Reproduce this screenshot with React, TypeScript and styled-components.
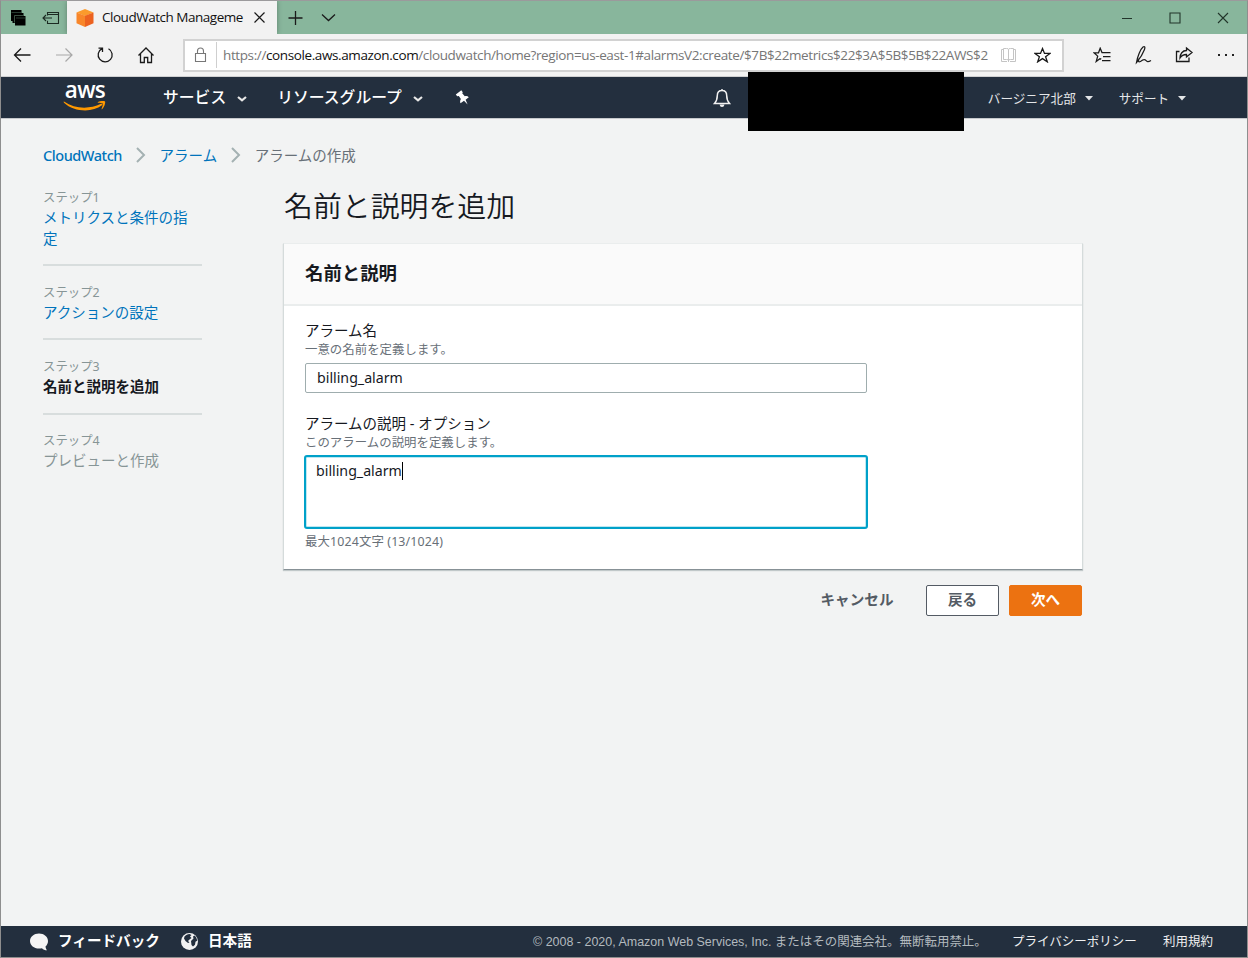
import React from "react";
import styled, { createGlobalStyle } from "styled-components";

const latin = `"Noto Sans", "Noto Sans CJK JP", sans-serif`;
const chromeFont = `"Open Sans", "Noto Sans", sans-serif`;

const Global = createGlobalStyle`
  * { box-sizing: border-box; }
  body { margin: 0; }
  #root { height: 958px; width: 1248px; }
`;

const Window = styled.div`
  width: 1248px;
  height: 958px;
  display: flex;
  flex-direction: column;
  border: 1px solid #8e8e8e;
  border-top-color: #9b9a9c;
  background: #f2f3f3;
  font-family: ${latin};
  color: #16191f;
  overflow: hidden;
  position: relative;
`;
const EdgeMark = styled.div`
  position: absolute;
  left: -1px;
  top: 149px;
  width: 1px;
  height: 26px;
  background: #217346;
`;

/* ---------- browser chrome ---------- */
const TitleBar = styled.div`
  height: 33px;
  flex: none;
  display: flex;
  background: #88b69c;
`;
const TabTools = styled.div`
  width: 66px;
  display: flex;
  align-items: center;
  padding-left: 9px;
  gap: 16px;
`;
const Tab = styled.div`
  width: 210px;
  background: #f2f2f2;
  display: flex;
  align-items: center;
  padding-left: 9px;
  box-shadow: 0 0 5px rgba(0, 0, 0, 0.3);
  clip-path: inset(0 -6px 0 -6px);
`;
const TabTitle = styled.div`
  width: 141px;
  margin-left: 8px;
  padding-bottom: 1px;
  white-space: nowrap;
  font: 13.5px/20px ${chromeFont};
  letter-spacing: -0.48px;
  color: #111;
`;
const TabClose = styled.div`
  margin-left: 11px;
  display: flex;
`;
const TabActions = styled.div`
  display: flex;
  align-items: center;
  padding-left: 11px;
  gap: 18px;
  flex: 1;
`;
const WindowControls = styled.div`
  display: flex;
  align-items: center;
  gap: 36px;
  padding-right: 18px;
`;

const Toolbar = styled.div`
  height: 43px;
  flex: none;
  display: flex;
  align-items: center;
  background: #f2f2f2;
  border-bottom: 1px solid #cfd0d1;
`;
const NavButtons = styled.div`
  display: flex;
  align-items: center;
  gap: 22px;
  padding: 0 27px 0 11px;
`;
const AddressBar = styled.div`
  width: 881px;
  height: 33px;
  display: flex;
  align-items: center;
  background: #fff;
  border: 2px solid #d2d2d2;
`;
const LockBox = styled.div`
  width: 32px;
  height: 26px;
  display: flex;
  align-items: center;
  padding-left: 9px;
  border-right: 1px solid #cfcfcf;
`;
const Url = styled.div`
  width: 767px;
  margin-left: 6px;
  white-space: nowrap;
  font: 13.5px/22px ${chromeFont};
  letter-spacing: -0.385px;
  color: #767676;
  b { font-weight: 400; color: #111; }
`;
const AddressActions = styled.div`
  display: flex;
  align-items: center;
  gap: 17px;
  padding-left: 10px;
`;
const ToolbarActions = styled.div`
  display: flex;
  align-items: center;
  gap: 21px;
  padding-left: 29px;
`;

/* ---------- console header ---------- */
const ConsoleNav = styled.header`
  height: 42px;
  flex: none;
  display: flex;
  align-items: center;
  background: #232f3e;
  border-bottom: 1px solid #c6c9cc;
  color: #fff;
`;
const Logo = styled.div`
  width: 44px;
  margin-left: 62px;
  height: 40px;
  display: flex;
  flex-direction: column;
  align-items: center;
`;
const LogoWord = styled.div`
  font: 600 22.5px/23px "Open Sans", sans-serif;
  letter-spacing: -0.7px;
  height: 23px;
`;
const NavMenu = styled.div<{ $left: number; $small?: boolean; $gap: number }>`
  margin-left: ${(p) => p.$left}px;
  display: flex;
  align-items: center;
  gap: ${(p) => p.$gap}px;
  white-space: nowrap;
  font-size: ${(p) => (p.$small ? 12.6 : 15.8)}px;
  font-weight: ${(p) => (p.$small ? 400 : 500)};
  color: ${(p) => (p.$small ? "#e4e6e8" : "#fff")};
  line-height: 22px;
  padding-bottom: ${(p) => (p.$small ? 0 : 2)}px;
  padding-top: ${(p) => (p.$small ? 2 : 0)}px;
  svg { position: relative; top: ${(p) => (p.$small ? 0 : 2)}px; }
`;
const NavIcon = styled.div<{ $left: number }>`
  margin-left: ${(p) => p.$left}px;
  display: flex;
`;
const AccountMask = styled.div`
  position: absolute;
  left: 747px;
  top: 71px;
  width: 216px;
  height: 59px;
  background: #000;
`;

/* ---------- page ---------- */
const Page = styled.div`
  flex: 1;
  padding: 25px 0 0 42px;
`;
const Breadcrumbs = styled.nav`
  display: flex;
  align-items: center;
  height: 22px;
  font-size: 14.5px;
  line-height: 22px;
`;
const Crumb = styled.span<{ $current?: boolean; $latin?: boolean }>`
  color: ${(p) => (p.$current ? "#687078" : "#0073bb")};
  letter-spacing: ${(p) => (p.$latin ? "-0.45px" : "0")};
  font-weight: ${(p) => (p.$latin ? 500 : 400)};
`;
const CrumbArrow = styled.svg`
  width: 10px;
  height: 16px;
  margin: 0 14px 0 13.6px;
`;
const Columns = styled.div`
  display: flex;
`;
const Steps = styled.ol`
  list-style: none;
  margin: 21.6px 0 0;
  padding: 0;
  width: 159px;
`;
const Step = styled.li`
  padding-bottom: 15.5px;
  & + & {
    border-top: 2px solid #d8dddd;
    padding-top: 16.8px;
  }
`;
const StepLabel = styled.div`
  font-size: 12.4px;
  line-height: 19px;
  color: #879596;
`;
const StepTitle = styled.div<{ $state: "link" | "active" | "todo" }>`
  width: 150px;
  font-size: 14.5px;
  line-height: 21px;
  color: ${(p) =>
    p.$state === "link" ? "#0073bb" : p.$state === "active" ? "#16191f" : "#879596"};
  font-weight: ${(p) => (p.$state === "active" ? 700 : 400)};
`;
const Main = styled.main`
  width: 800px;
  margin-left: 81px;
`;
const PageTitle = styled.h1`
  margin: 19px 0 16px 1px;
  font-size: 28.9px;
  line-height: 42px;
  font-weight: 350;
`;
const Card = styled.section`
  height: 327px;
  background: #fff;
  border: 1px solid #d5dbdb;
  border-top-color: #eaeded;
  border-bottom-color: #879196;
  box-shadow: 0 1px 1px rgba(0, 28, 36, 0.2);
`;
const CardHeader = styled.div`
  height: 62px;
  background: #fafafa;
  border-bottom: 2px solid #eaeded;
  padding: 15px 21px 0;
  font-size: 18.4px;
  line-height: 28px;
  font-weight: 700;
`;
const Fields = styled.div`
  padding: 14px 21px;
`;
const Field = styled.div`
  width: 562px;
  & + & { margin-top: 20px; }
`;
const FieldLabel = styled.div`
  font-size: 14.5px;
  line-height: 20px;
  padding-bottom: 1px;
`;
const Hint = styled.div<{ $counter?: boolean }>`
  font-size: 12.4px;
  line-height: 17px;
  letter-spacing: ${(p) => (p.$counter ? "0.13px" : "0.04px")};
  color: #687078;
  white-space: nowrap;
`;
const InputBox = styled.div`
  height: 30px;
  margin-top: 5px;
  border: 1px solid #9fadae;
  border-radius: 2px;
  padding: 0 11px;
  font-size: 14.2px;
  line-height: 28px;
`;
const TextArea = styled.div`
  width: 564px;
  height: 74px;
  margin: 4px 0 4px -1px;
  border: 2px solid #00a1c9;
  box-shadow: inset 0 0 0 0.5px #7fd0e4;
  border-radius: 3px;
  padding: 4px 10px;
  display: flex;
  font-size: 14.2px;
  line-height: 20px;
`;
const Caret = styled.span`
  width: 1px;
  height: 18px;
  margin-top: 1px;
  background: #000;
`;
const Actions = styled.div`
  display: flex;
  justify-content: flex-end;
  padding: 15px 1px 0 0;
  gap: 10px;
`;
const Button = styled.div<{ $kind: "link" | "normal" | "primary" }>`
  width: ${(p) => (p.$kind === "link" ? 118 : 73)}px;
  height: 31px;
  text-align: center;
  font-size: 14.6px;
  font-weight: 700;
  line-height: 26px;
  border-radius: 2px;
  border: 1.5px solid ${(p) =>
    p.$kind === "link" ? "transparent" : p.$kind === "normal" ? "#545b64" : "#ec7211"};
  color: ${(p) => (p.$kind === "primary" ? "#fff" : "#545b64")};
  background: ${(p) =>
    p.$kind === "link" ? "transparent" : p.$kind === "normal" ? "#fff" : "#ec7211"};
`;

/* ---------- footer ---------- */
const Footer = styled.footer`
  height: 31px;
  flex: none;
  display: flex;
  align-items: center;
  background: #232f3e;
  color: #fff;
  padding-left: 28px;
  white-space: nowrap;
`;
const FooterMenu = styled.div<{ $width: number }>`
  width: ${(p) => p.$width}px;
  display: flex;
  align-items: center;
  gap: 9px;
  font-size: 14.6px;
  font-weight: 700;
  line-height: 22px;
  padding-bottom: 3px;
  svg { position: relative; top: 1.5px; }
`;
const Copyright = styled.div`
  margin-left: auto;
  font: 12.48px/20px "Liberation Sans", "Noto Sans CJK JP", sans-serif;
  color: #b3babf;
  width: 479px;
`;
const FooterLink = styled.div<{ $width: number }>`
  width: ${(p) => p.$width}px;
  font-size: 12.5px;
  line-height: 20px;
  color: #f0f1f2;
`;

const Stroke = ({
  w, h, d, color = "#1a1a1a", sw = 1.2,
}: { w: number; h: number; d: string; color?: string; sw?: number }) => (
  <svg width={w} height={h} viewBox={`0 0 ${w} ${h}`} fill="none" stroke={color} strokeWidth={sw}>
    <path d={d} />
  </svg>
);

const Chevron = () => (
  <svg width="10" height="6" viewBox="0 0 10 6" fill="none" stroke="#e8e8e8" strokeWidth="2.2">
    <path d="M1 1l4 3.300L9 1" />
  </svg>
);
const Triangle = () => (
  <svg width="8" height="5" viewBox="0 0 8 5"><path d="M0 0h8L4 4.600z" fill="#e4e6e8" /></svg>
);
const Arrow = () => (
  <CrumbArrow viewBox="0 0 10 16" fill="none" stroke="#a4b1b2" strokeWidth="2">
    <path d="M1 1l7 7-7 7" />
  </CrumbArrow>
);

export default function App() {
  return (
    <Window>
      <Global />
      <TitleBar>
        <TabTools>
          <svg width="16" height="16" viewBox="0 0 16 16">
            <path d="M1 0h10.500v3.500H4V11H1z" fill="#000" />
            <path d="M2.500 3h11v10h-11z" fill="#000" />
            <path d="M5 6h10.500v9.500H5z" fill="#000" />
            <path d="M1.500 2.500h9.500M6 8h9" stroke="#416352" strokeWidth=".6" />
            <path d="M4.500 12.500V5.500H13" stroke="#55735f" strokeWidth=".7" fill="none" />
          </svg>
          <Stroke w={18} h={14} d="M5.500 4.500v-3h11v11h-11V9.800M5.500 3.500h11M10 7H1M4 4L1 7l3 3" color="#1b2a22" sw={1.1} />
        </TabTools>
        <Tab>
          <svg width="18" height="18" viewBox="0 0 18 18">
            <path d="M9 0l8.500 3.500L9 7 .5 3.500z" fill="#fb9a2c" />
            <path d="M.5 3.500L9 6.800V18L.5 14.300z" fill="#f8862a" />
            <path d="M17.500 3.500L9 6.800V18l8.500-3.700z" fill="#ec6220" />
          </svg>
          <TabTitle>CloudWatch Manageme</TabTitle>
          <TabClose><Stroke w={11} h={11} d="M.5.5l10 10M10.500.5l-10 10" /></TabClose>
        </Tab>
        <TabActions>
          <Stroke w={15} h={15} d="M7.500 1v14M.5 8h14" sw={1.3} />
          <Stroke w={15} h={9} d="M1 1.500l6.500 6 6.500-6" sw={1.3} />
        </TabActions>
        <WindowControls>
          <Stroke w={12} h={12} d="M1 6.500h10" color="#22352b" sw={1} />
          <Stroke w={12} h={12} d="M1 1h10v10H1z" color="#22352b" sw={1.1} />
          <Stroke w={12} h={12} d="M1 1l10 10M11 1l-10 10" color="#22352b" sw={1.1} />
        </WindowControls>
      </TitleBar>

      <Toolbar>
        <NavButtons>
          <Stroke w={20} h={16} d="M18.500 8H2.500M9 1.500L2.500 8 9 14.500" sw={1.3} />
          <Stroke w={20} h={16} d="M2 8h16M11.500 1.500L18 8l-6.500 6.500" color="#a8a8a8" sw={1.2} />
          <Stroke w={18} h={18} d="M6 2.600A7 7 0 1 0 12.500 2.700M2.500 2.100h4v4" sw={1.3} />
          <Stroke w={20} h={18} d="M2.500 9.500L10 2l7.500 7.500M4.500 8v8.500h3.800v-5h3.400v5h3.800V8" sw={1.3} />
        </NavButtons>
        <AddressBar>
          <LockBox><Stroke w={14} h={16} d="M1.500 6.500h10v8h-10zM3.500 6.500V4a3 3 0 0 1 6 0v2.500" color="#777" sw={1.1} /></LockBox>
          <Url>https://<b>console.aws.amazon.com</b>/cloudwatch/home?region=us-east-1#alarmsV2:create/$7B$22metrics$22$3A$5B$5B$22AWS$2</Url>
          <AddressActions>
            <Stroke w={17} h={16} d="M8.500 2.500v12.500M3.500 1.500h3q2 0 2 1 0-1 2-1h3v11h-3q-2 0-2 1 0-1-2-1h-3zM3.500 2.500h-2v12h5.500M13.500 2.500h2v12H10" color="#c4c4c4" sw={1} />
            <Stroke w={17} h={16} d="M8.500 1.500l2 4.900h5.500l-4.400 3.300 1.700 5.100-4.800-3.200-4.800 3.200 1.700-5.100L1 6.400h5.500z" sw={1.3} />
          </AddressActions>
        </AddressBar>
        <ToolbarActions>
          <Stroke w={20} h={16} d="M12 5.500H9L7.200 1.200 5.500 5.800H1l3.700 3.300L3.200 14.500l4-3 M7.200 11.500l1 .8M10 5.500h7.500M10 9.500h7.500M9 13.500h8.500" sw={1.25} />
          <Stroke w={20} h={20} d="M2.500 17.500c1-6 4-13.500 6.500-15.500 1.500-1 2.500 0 1.500 2.500C9 8.500 5.500 14 2.500 17.500zM5 13.500c-1 3-.5 4 1.500 3 3-1.500 3-3 5-1.500 1.500 1.500 2 2.500 5.500.5" sw={1.25} />
          <Stroke w={20} h={18} d="M4.500 5.500h-3v10h12.500v-4M11.500 2l5.500 4.500-5.500 4.500V8.500c-3 0-5 1-6.500 3.500 0-4 2.500-7.500 6.500-7.500z" sw={1.3} />
          <svg width="20" height="16"><path d="M2 7h2v2H2zM9 7h2v2H9zM16 7h2v2h-2z" fill="#222" /></svg>
        </ToolbarActions>
      </Toolbar>

      <ConsoleNav>
        <Logo>
          <LogoWord>aws</LogoWord>
          <svg width="44" height="12" viewBox="0 0 44 12">
            <path d="M1 .5c11 7.500 25 8 37 2.300 1.200-.5 2 .6 1 1.500C29 12 11 11 1 1.700c-.5-.6-.3-1.400 0-1.200z" fill="#f90" />
            <path d="M35 .9c3-1.200 6.500-1.200 7-.5.6.8-.2 5.300-2.700 7.600-.5.400-.9.200-.7-.3 1-2.200 1.500-4.700 1.100-5.300-.4-.5-2.700-.6-4.700-.7-.5-.1-.5-.6 0-.8z" fill="#f90" />
          </svg>
        </Logo>
        <NavMenu $left={56} $gap={11}>サービス<Chevron /></NavMenu>
        <NavMenu $left={30} $gap={11}>リソースグループ<Chevron /></NavMenu>
        <NavIcon $left={32}>
          <svg width="15" height="15" viewBox="0 0 15 15" fill="#fff">
            <path d="M.8 4.500L6.300.3l1.500 1.900-.6 1.100 2.600 3c1.600-.5 3-.1 4 1l-3.200 2.500 2 4.600-3.600-3.700-3.500 2.600c-.6-1.600-.4-3.200.4-4.400L3.800 6.100l-1.600.2z" />
          </svg>
        </NavIcon>
        <NavIcon $left={243}>
          <svg width="18" height="20" viewBox="0 0 18 20" fill="none" stroke="#f0f0f0" strokeWidth="1.5">
            <path d="M9 2.500c-3 0-4.700 2.200-4.700 5 0 4-1 6-2.800 8h15c-1.800-2-2.800-4-2.800-8 0-2.800-1.700-5-4.700-5zM9 1v2" />
            <path d="M6.500 16.500h5q-.5 2.500-2.500 2.500t-2.500-2.500z" fill="#f0f0f0" stroke="none" />
          </svg>
        </NavIcon>
        <NavMenu $left={257} $gap={9} $small>バージニア北部<Triangle /></NavMenu>
        <NavMenu $left={26} $gap={9} $small>サポート<Triangle /></NavMenu>
      </ConsoleNav>
      <AccountMask />
      <EdgeMark />

      <Page>
        <Breadcrumbs>
          <Crumb $latin>CloudWatch</Crumb><Arrow />
          <Crumb>アラーム</Crumb><Arrow />
          <Crumb $current>アラームの作成</Crumb>
        </Breadcrumbs>
        <Columns>
          <Steps>
            <Step><StepLabel>ステップ1</StepLabel><StepTitle $state="link">メトリクスと条件の指定</StepTitle></Step>
            <Step><StepLabel>ステップ2</StepLabel><StepTitle $state="link">アクションの設定</StepTitle></Step>
            <Step><StepLabel>ステップ3</StepLabel><StepTitle $state="active">名前と説明を追加</StepTitle></Step>
            <Step><StepLabel>ステップ4</StepLabel><StepTitle $state="todo">プレビューと作成</StepTitle></Step>
          </Steps>
          <Main>
            <PageTitle>名前と説明を追加</PageTitle>
            <Card>
              <CardHeader>名前と説明</CardHeader>
              <Fields>
                <Field>
                  <FieldLabel>アラーム名</FieldLabel>
                  <Hint>一意の名前を定義します。</Hint>
                  <InputBox>billing_alarm</InputBox>
                </Field>
                <Field>
                  <FieldLabel>アラームの説明 - オプション</FieldLabel>
                  <Hint>このアラームの説明を定義します。</Hint>
                  <TextArea>billing_alarm<Caret /></TextArea>
                  <Hint $counter>最大1024文字 (13/1024)</Hint>
                </Field>
              </Fields>
            </Card>
            <Actions>
              <Button $kind="link">キャンセル</Button>
              <Button $kind="normal">戻る</Button>
              <Button $kind="primary">次へ</Button>
            </Actions>
          </Main>
        </Columns>
      </Page>

      <Footer>
        <FooterMenu $width={151}>
          <svg width="20" height="18" viewBox="0 0 20 18" fill="#f5f5f5">
            <path d="M10 .5c5 0 9 3.200 9 7.500 0 2.300-1 4.200-2.500 5.500.1 1.500.7 2.700 1.500 3.700-2 0-3.800-.6-5-2-1 .3-2 .4-3 .4-5 0-9-3.300-9-7.600S5 .5 10 .5z" />
          </svg>
          フィードバック
        </FooterMenu>
        <FooterMenu $width={80}>
          <svg width="19" height="19" viewBox="0 0 19 19">
            <circle cx="9.500" cy="9.500" r="8.500" fill="#f2f2f2" />
            <path d="M4.500 4.500c1.500-1.500 3-2.200 5-2.500l2 1-1.500 1.500 1.500 1.500-2 1.500L8 9l1.500 1.500L8 11 5.500 9 4 6.500zM11 9l2.500-2.500L13 4.500l1.500-1c1.500 1.300 2.500 3.200 2.600 5.200l-1.600 1-.5 3-2 1.800L11.500 13z" fill="#232f3e" />
          </svg>
          日本語
        </FooterMenu>
        <Copyright>© 2008 - 2020, Amazon Web Services, Inc. またはその関連会社。無断転用禁止。</Copyright>
        <FooterLink $width={151}>プライバシーポリシー</FooterLink>
        <FooterLink $width={84}>利用規約</FooterLink>
      </Footer>
    </Window>
  );
}
